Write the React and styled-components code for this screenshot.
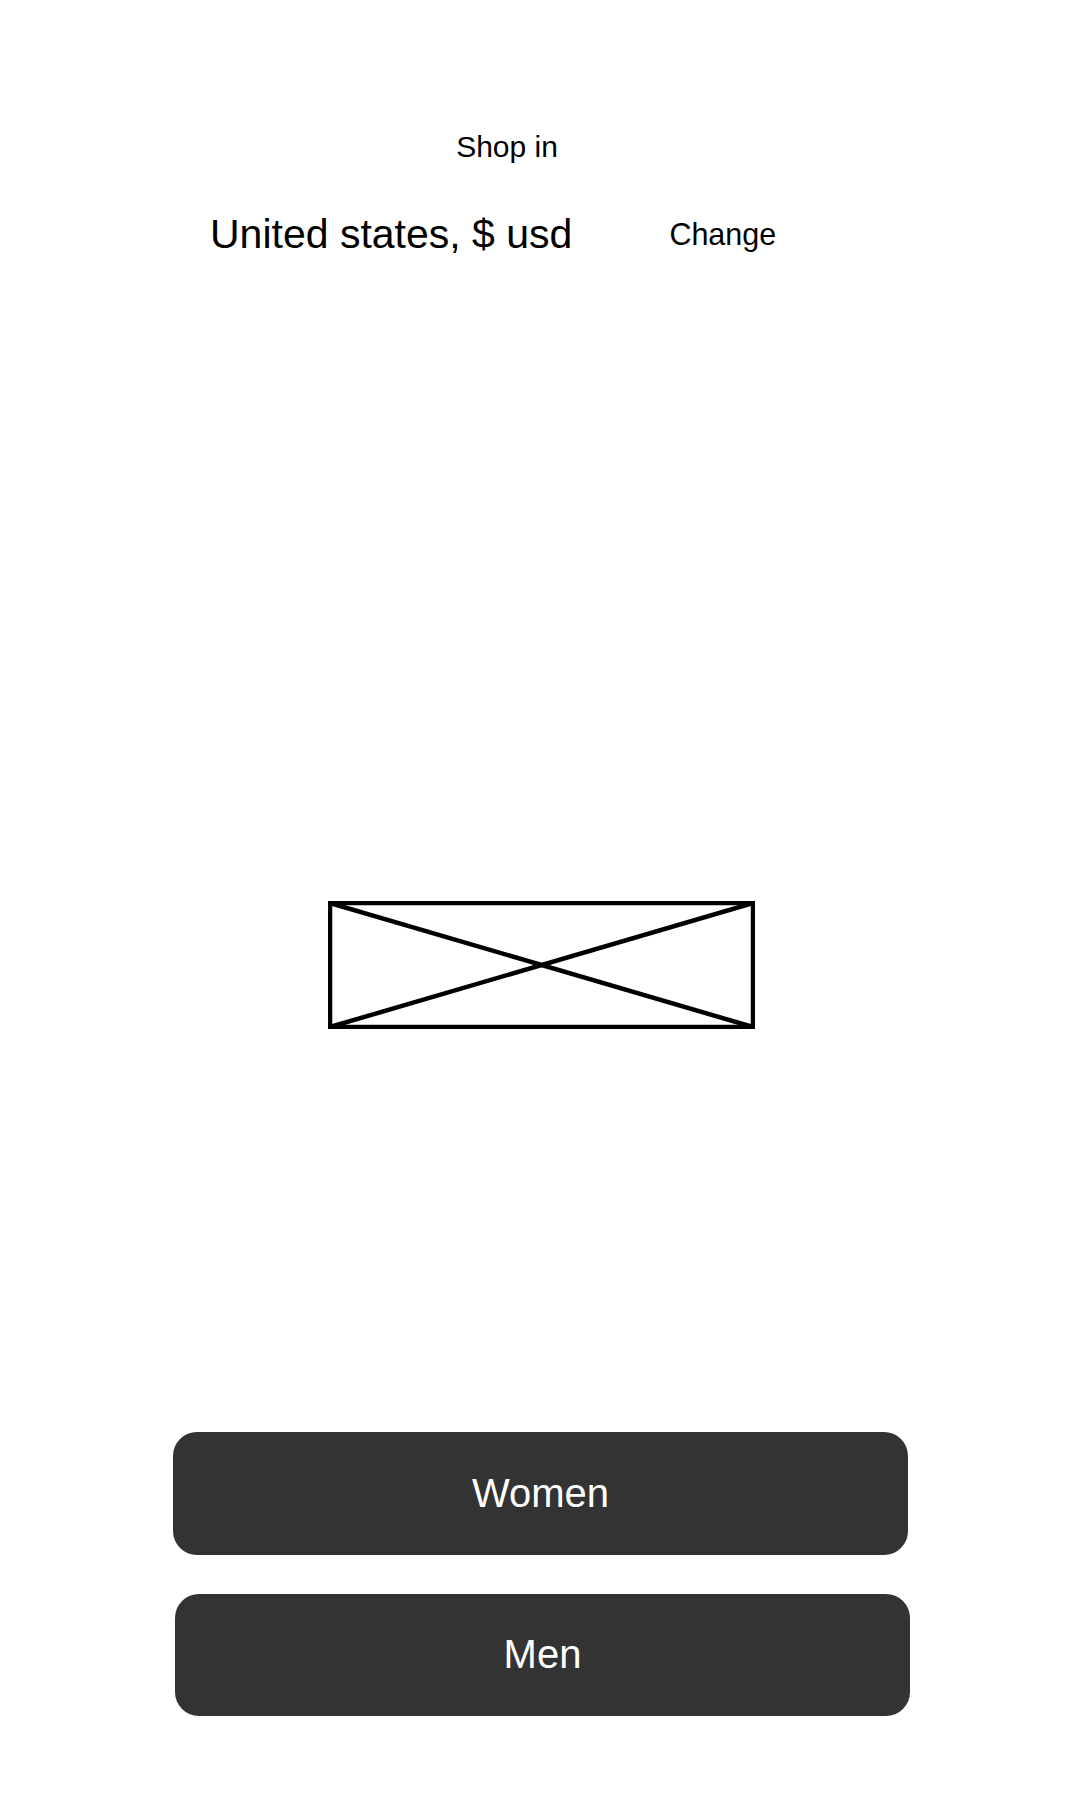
import React from "react";
import styled, { createGlobalStyle } from "styled-components";

const Global = createGlobalStyle`
  html, body { margin: 0; padding: 0; background: #fff; }
  body { font-family: "Liberation Sans", Arial, sans-serif; color: #000; }
`;

const Page = styled.div`
  width: 1080px;
  min-height: 1800px;
  display: flex;
  flex-direction: column;
  background: #fff;
`;

const Header = styled.header`
  padding-top: 129px;
  display: flex;
  flex-direction: column;
`;

const Title = styled.div`
  font-size: 30px;
  line-height: 36px;
  text-align: center;
  padding-right: 66px;
`;

const LocaleRow = styled.div`
  margin-top: 39px;
  height: 60px;
  display: flex;
  align-items: center;
  padding-left: 210px;
  gap: 97px;
`;

const Country = styled.span`
  font-size: 41px;
  line-height: 48px;
`;

const ChangeLink = styled.span`
  font-size: 30.5px;
  line-height: 36px;
  cursor: pointer;
`;

const PlaceholderWrap = styled.div`
  margin-top: 637px;
  display: flex;
  justify-content: center;
  padding-left: 3px;
`;

const ButtonStack = styled.div`
  margin-top: 403px;
  display: flex;
  flex-direction: column;
  gap: 39px;
  padding-left: 173px;
`;

const BigButton = styled.button`
  width: 735px;
  height: ${(p) => p.$h}px;
  margin-left: ${(p) => p.$shift || 0}px;
  border: none;
  border-radius: 24px;
  background: #333333;
  color: #fff;
  font-family: "Liberation Sans", Arial, sans-serif;
  font-size: 40px;
  line-height: 48px;
  display: flex;
  align-items: center;
  justify-content: center;
  padding: 0 0 2px;
  cursor: pointer;
`;

function ImagePlaceholder() {
  return (
    <svg width="427" height="128" viewBox="0 0 427 128" fill="none">
      <rect x="2" y="2" width="423" height="124" stroke="#000" strokeWidth="4.5" />
      <line x1="2" y1="2" x2="425" y2="126" stroke="#000" strokeWidth="4.5" />
      <line x1="2" y1="126" x2="425" y2="2" stroke="#000" strokeWidth="4.5" />
    </svg>
  );
}

export default function App() {
  return (
    <>
      <Global />
      <Page>
        <Header>
          <Title>Shop in</Title>
          <LocaleRow>
            <Country>United states, $ usd</Country>
            <ChangeLink>Change</ChangeLink>
          </LocaleRow>
        </Header>
        <PlaceholderWrap>
          <ImagePlaceholder />
        </PlaceholderWrap>
        <ButtonStack>
          <BigButton $h={123}>Women</BigButton>
          <BigButton $h={122} $shift={2}>Men</BigButton>
        </ButtonStack>
      </Page>
    </>
  );
}
